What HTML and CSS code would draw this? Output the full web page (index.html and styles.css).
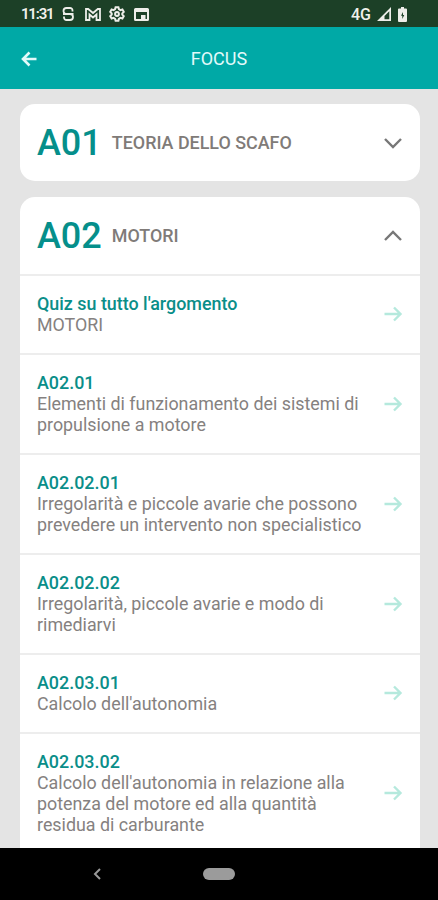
FILE: index.html
```html
<!DOCTYPE html>
<html lang="it">
<head>
  <meta charset="UTF-8" />
  <meta name="viewport" content="width=device-width, initial-scale=1.0" />
  <title>Focus</title>
  <link rel="stylesheet" href="styles.css">
</head>
<body>
  <svg class="defs" width="0" height="0">
    <symbol id="arrow" viewBox="0 0 20 18">
      <path d="M1.500 9h16M11 2.500L17.500 9 11 15.500" />
    </symbol>
    <symbol id="chevron" viewBox="0 0 20 12">
      <path d="M2 2l8 8 8-8" />
    </symbol>
  </svg>

  <div class="status">
    <span class="time">11:31</span>
    <svg class="s-icon" width="12" height="14" viewBox="0 0 12 14">
      <path d="M10.500 4.500V3.500A2.500 2.500 0 0 0 8 1H4.500a3 3 0 0 0 0 6h3.500a3 3 0 0 1 0 6H4.500A2.500 2.500 0 0 1 2 10.500v-1M1 7h10.500" />
    </svg>
    <svg class="m-icon" width="16" height="13" viewBox="0 0 16 13">
      <path d="M1 12V1h2.200L8 5l4.800-4H15v11h-3.500V6.500L8 9.500 4.500 6.500V12z" />
    </svg>
    <svg class="gear" width="16" height="16" viewBox="0 0 16 16">
      <path d="M6.600 1.200h2.800l.5 2 1.500.9 2-.6 1.400 2.400-1.500 1.500v1.200l1.500 1.500-1.400 2.400-2-.6-1.500.9-.5 2H6.600l-.5-2-1.500-.9-2 .6-1.400-2.400 1.500-1.500V7.400L1.200 5.900l1.400-2.400 2 .6 1.500-.9z" />
      <circle cx="8" cy="8" r="1.900" />
    </svg>
    <svg class="news" width="15" height="13" viewBox="0 0 15 13">
      <path fill-rule="evenodd" d="M1.500 0h12A1.500 1.500 0 0 1 15 1.500v10a1.500 1.500 0 0 1-1.500 1.500h-12A1.500 1.500 0 0 1 0 11.500v-10A1.500 1.500 0 0 1 1.500 0zM2 4v7h5V7h4.500v4H13V4z" />
    </svg>
    <span class="net">4G</span>
    <svg class="signal" width="14" height="14" viewBox="0 0 14 14">
      <path fill-rule="evenodd" d="M14 0v14H0zM12.300 4.200L7.500 9v3.300h4.800z" />
    </svg>
    <svg class="battery" width="9" height="15" viewBox="0 0 9 15">
      <path fill-rule="evenodd" d="M3 0h3v1.500h2a1 1 0 0 1 1 1V14a1 1 0 0 1-1 1H1a1 1 0 0 1-1-1V2.500a1 1 0 0 1 1-1h2zM5 5L3 8.800h1.300V12L6.300 8H5z" />
    </svg>
  </div>

  <header class="topbar">
    <svg class="back" width="17" height="16" viewBox="0 0 17 16">
      <path d="M15.500 8H2.500M8.500 1.500L2 8l6.500 6.500" />
    </svg>
    <h1>FOCUS</h1>
  </header>

  <main>
    <section class="card">
      <div class="card-head">
        <span class="code">A01</span>
        <span class="name">TEORIA DELLO SCAFO</span>
        <svg class="chevron" width="20" height="12"><use href="#chevron" /></svg>
      </div>
    </section>

    <section class="card open">
      <div class="card-head">
        <span class="code">A02</span>
        <span class="name">MOTORI</span>
        <svg class="chevron up" width="20" height="12"><use href="#chevron" /></svg>
      </div>
      <div class="row">
        <div class="text">
          <h2>Quiz su tutto l'argomento</h2>
          <p>MOTORI</p>
        </div>
        <svg class="arrow" width="20" height="18"><use href="#arrow" /></svg>
      </div>
      <div class="row">
        <div class="text">
          <h2>A02.01</h2>
          <p>Elementi di funzionamento dei sistemi di<br>propulsione a motore</p>
        </div>
        <svg class="arrow" width="20" height="18"><use href="#arrow" /></svg>
      </div>
      <div class="row">
        <div class="text">
          <h2>A02.02.01</h2>
          <p>Irregolarità e piccole avarie che possono<br>prevedere un intervento non specialistico</p>
        </div>
        <svg class="arrow" width="20" height="18"><use href="#arrow" /></svg>
      </div>
      <div class="row">
        <div class="text">
          <h2>A02.02.02</h2>
          <p>Irregolarità, piccole avarie e modo di<br>rimediarvi</p>
        </div>
        <svg class="arrow" width="20" height="18"><use href="#arrow" /></svg>
      </div>
      <div class="row">
        <div class="text">
          <h2>A02.03.01</h2>
          <p>Calcolo dell'autonomia</p>
        </div>
        <svg class="arrow" width="20" height="18"><use href="#arrow" /></svg>
      </div>
      <div class="row">
        <div class="text">
          <h2>A02.03.02</h2>
          <p>Calcolo dell'autonomia in relazione alla<br>potenza del motore ed alla quantità<br>residua di carburante</p>
        </div>
        <svg class="arrow" width="20" height="18"><use href="#arrow" /></svg>
      </div>
    </section>
  </main>

  <nav class="navbar">
    <svg class="nav-back" width="8" height="12" viewBox="0 0 8 12">
      <path d="M7 1L2 6l5 5" />
    </svg>
    <span class="pill"></span>
    <span></span>
  </nav>
</body>
</html>
```
FILE: styles.css
```css
* { box-sizing: border-box; }
body { margin: 0; height: 900px; display: flex; flex-direction: column; overflow: hidden; background: #e4e4e4; font-family: Roboto, sans-serif; }
h1, h2, p { margin: 0; }
svg { display: block; flex: none; fill: none; }
.defs { position: absolute; }

.status { flex: none; height: 27px; padding: 1px 31px 0 21px; display: flex; align-items: center; background: #1c4027; color: #f1f1ec; font-size: 15px; font-weight: 500; }
.status svg { fill: #eeeeea; }
.time { width: 41px; font-weight: 600; letter-spacing: -1.2px; }
.status .s-icon, .status .m-icon, .status .gear { fill: none; stroke: #eeeeea; stroke-width: 1.8; }
.status .gear { stroke-width: 2; }
.m-icon { margin-left: 11px; }
.gear { margin-left: 8px; }
.news { margin-left: 9px; }
.net { margin-left: auto; font-size: 16px; }
.signal { margin-left: 6px; }
.battery { margin-left: 7px; }

.topbar { flex: none; height: 62px; padding: 0 21px; display: grid; grid-template-columns: 17px 1fr 17px; align-items: center; background: #00a9a6; color: #e2fafa; }
.topbar h1 { text-align: center; font-size: 18px; font-weight: 400; }
.back { margin-top: 1px; stroke: #e2fafa; stroke-width: 2.6; }

main { flex: 1; min-height: 0; padding: 15px 18px 0 20px; display: flex; flex-direction: column; gap: 16px; overflow: hidden; }
.card { flex: none; background: #fff; border-radius: 15px; }
.open { padding-bottom: 20px; }
.card-head { height: 77px; padding: 0 17px; display: flex; align-items: center; }
.code { color: #058f8b; font-size: 36px; font-weight: 500; }
.name { flex: 1; margin-left: 10px; color: #807b78; font-size: 17.9px; font-weight: 500; }
.chevron { stroke: #777; stroke-width: 2.4; }
.up { transform: rotate(180deg); }

.row { padding: 17.4px 17px 17.6px; display: flex; align-items: center; border-top: 2px solid #ededed; }
.text { flex: 1; white-space: nowrap; line-height: 21px; }
.text h2 { color: #0a8e89; font-size: 17.9px; font-weight: 500; }
.text p { color: #858180; font-size: 17.85px; font-weight: 400; }
.arrow { stroke: #b5e9dd; stroke-width: 2.4; }

.navbar { flex: none; height: 52px; padding: 0 93px; display: grid; grid-template-columns: 1fr 32px 1fr; align-items: center; background: #000; }
.nav-back { stroke: #999; stroke-width: 2; }
.pill { width: 32px; height: 12px; border-radius: 6px; background: #9b9b9b; }
```
